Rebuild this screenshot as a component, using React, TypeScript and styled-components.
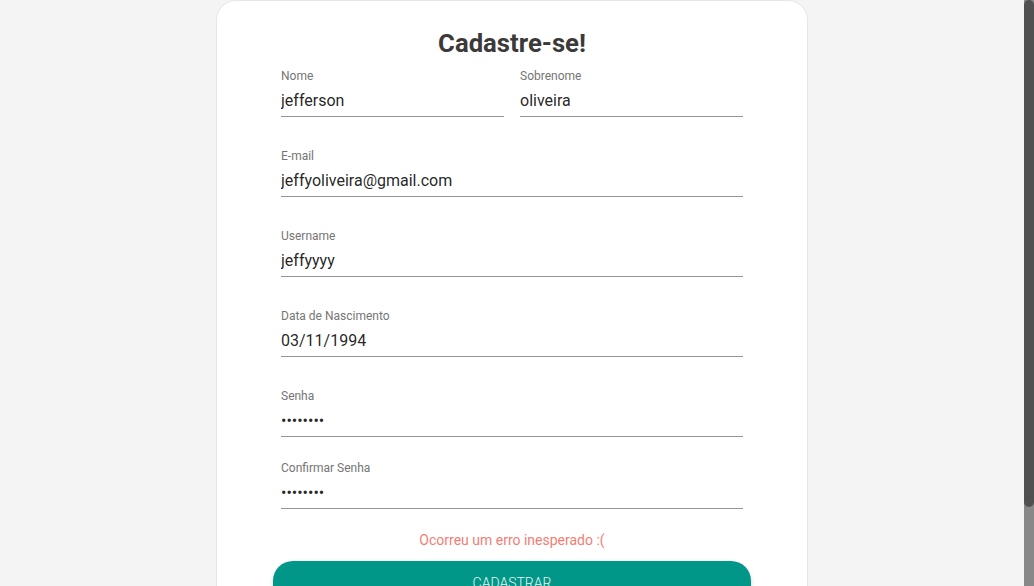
import styled, { createGlobalStyle } from 'styled-components';

const GlobalStyle = createGlobalStyle`
  body {
    margin: 0;
    background: #f4f4f4;
    font-family: Roboto, 'Liberation Sans', sans-serif;
  }
`;

const Viewport = styled.div`
  display: flex;
  height: 100vh;
  overflow: hidden;
`;

const Main = styled.div`
  flex: 1;
  min-width: 0;
  display: flex;
  justify-content: center;
  align-items: flex-start;
  padding-bottom: 40px;
`;

const ScrollTrack = styled.div`
  width: 10px;
  flex-shrink: 0;
  background: #888888;
`;

const ScrollThumb = styled.div`
  height: 507px;
  background: #505050;
  border-radius: 5px;
`;

const Card = styled.form`
  width: 592px;
  box-sizing: border-box;
  background: #ffffff;
  border: 1px solid #e6e6e6;
  border-radius: 20px;
  padding: 27px 56px 40px;
  display: flex;
  flex-direction: column;
  flex-shrink: 0;
`;

const Title = styled.h1`
  margin: 0 0 10px;
  font-size: 25.7px;
  line-height: 30px;
  font-weight: 700;
  color: #3b3a39;
  text-align: center;
`;

const Fields = styled.div`
  padding: 0 8px;
  display: flex;
  flex-direction: column;
`;

const Row = styled.div`
  display: grid;
  grid-template-columns: 1fr 1fr;
  gap: 16px;
`;

const Field = styled.label<{ $gap?: number }>`
  display: flex;
  flex-direction: column;
  margin-top: ${(p) => p.$gap ?? 31}px;
`;

const Label = styled.span`
  font-size: 12px;
  line-height: 16px;
  color: #757575;
`;

const Input = styled.input`
  width: 100%;
  box-sizing: border-box;
  border: none;
  border-bottom: 1px solid #949494;
  padding: 7px 0 6px;
  margin: 0;
  font-family: Roboto, 'Liberation Sans', sans-serif;
  font-size: 16px;
  line-height: 19px;
  height: 33px;
  color: rgba(0, 0, 0, 0.87);
  background: transparent;
  outline: none;
`;

const ErrorText = styled.p`
  margin: 22px 0 0;
  text-align: center;
  font-size: 14px;
  line-height: 18px;
  color: #f37d74;
`;

const SubmitButton = styled.button`
  margin-top: 12px;
  width: 100%;
  border: none;
  border-radius: 20px;
  background: #009688;
  color: #e8f5f3;
  font-family: Roboto, 'Liberation Sans', sans-serif;
  font-size: 14px;
  font-weight: 300;
  line-height: 24px;
  padding: 10px 16px;
  text-transform: uppercase;
  box-shadow: 0 3px 1px -2px rgba(0, 0, 0, 0.2), 0 2px 2px 0 rgba(0, 0, 0, 0.14),
    0 1px 5px 0 rgba(0, 0, 0, 0.12);
  cursor: pointer;
`;

type FieldProps = {
  label: string;
  value: string;
  type?: string;
  gap?: number;
};

const TextField = ({ label, value, type = 'text', gap }: FieldProps) => (
  <Field $gap={gap}>
    <Label>{label}</Label>
    <Input type={type} defaultValue={value} readOnly />
  </Field>
);

export default function App() {
  return (
    <Viewport>
      <GlobalStyle />
      <Main>
        <Card onSubmit={(e) => e.preventDefault()}>
          <Title>Cadastre-se!</Title>
          <Fields>
            <Row>
              <TextField label="Nome" value="jefferson" gap={0} />
              <TextField label="Sobrenome" value="oliveira" gap={0} />
            </Row>
            <TextField label="E-mail" value="jeffyoliveira@gmail.com" />
            <TextField label="Username" value="jeffyyyy" />
            <TextField label="Data de Nascimento" value="03/11/1994" />
            <TextField label="Senha" value="12345678" type="password" />
            <TextField label="Confirmar Senha" value="12345678" type="password" gap={23} />
          </Fields>
          <ErrorText>Ocorreu um erro inesperado :(</ErrorText>
          <SubmitButton type="submit">Cadastrar</SubmitButton>
        </Card>
      </Main>
      <ScrollTrack>
        <ScrollThumb />
      </ScrollTrack>
    </Viewport>
  );
}
